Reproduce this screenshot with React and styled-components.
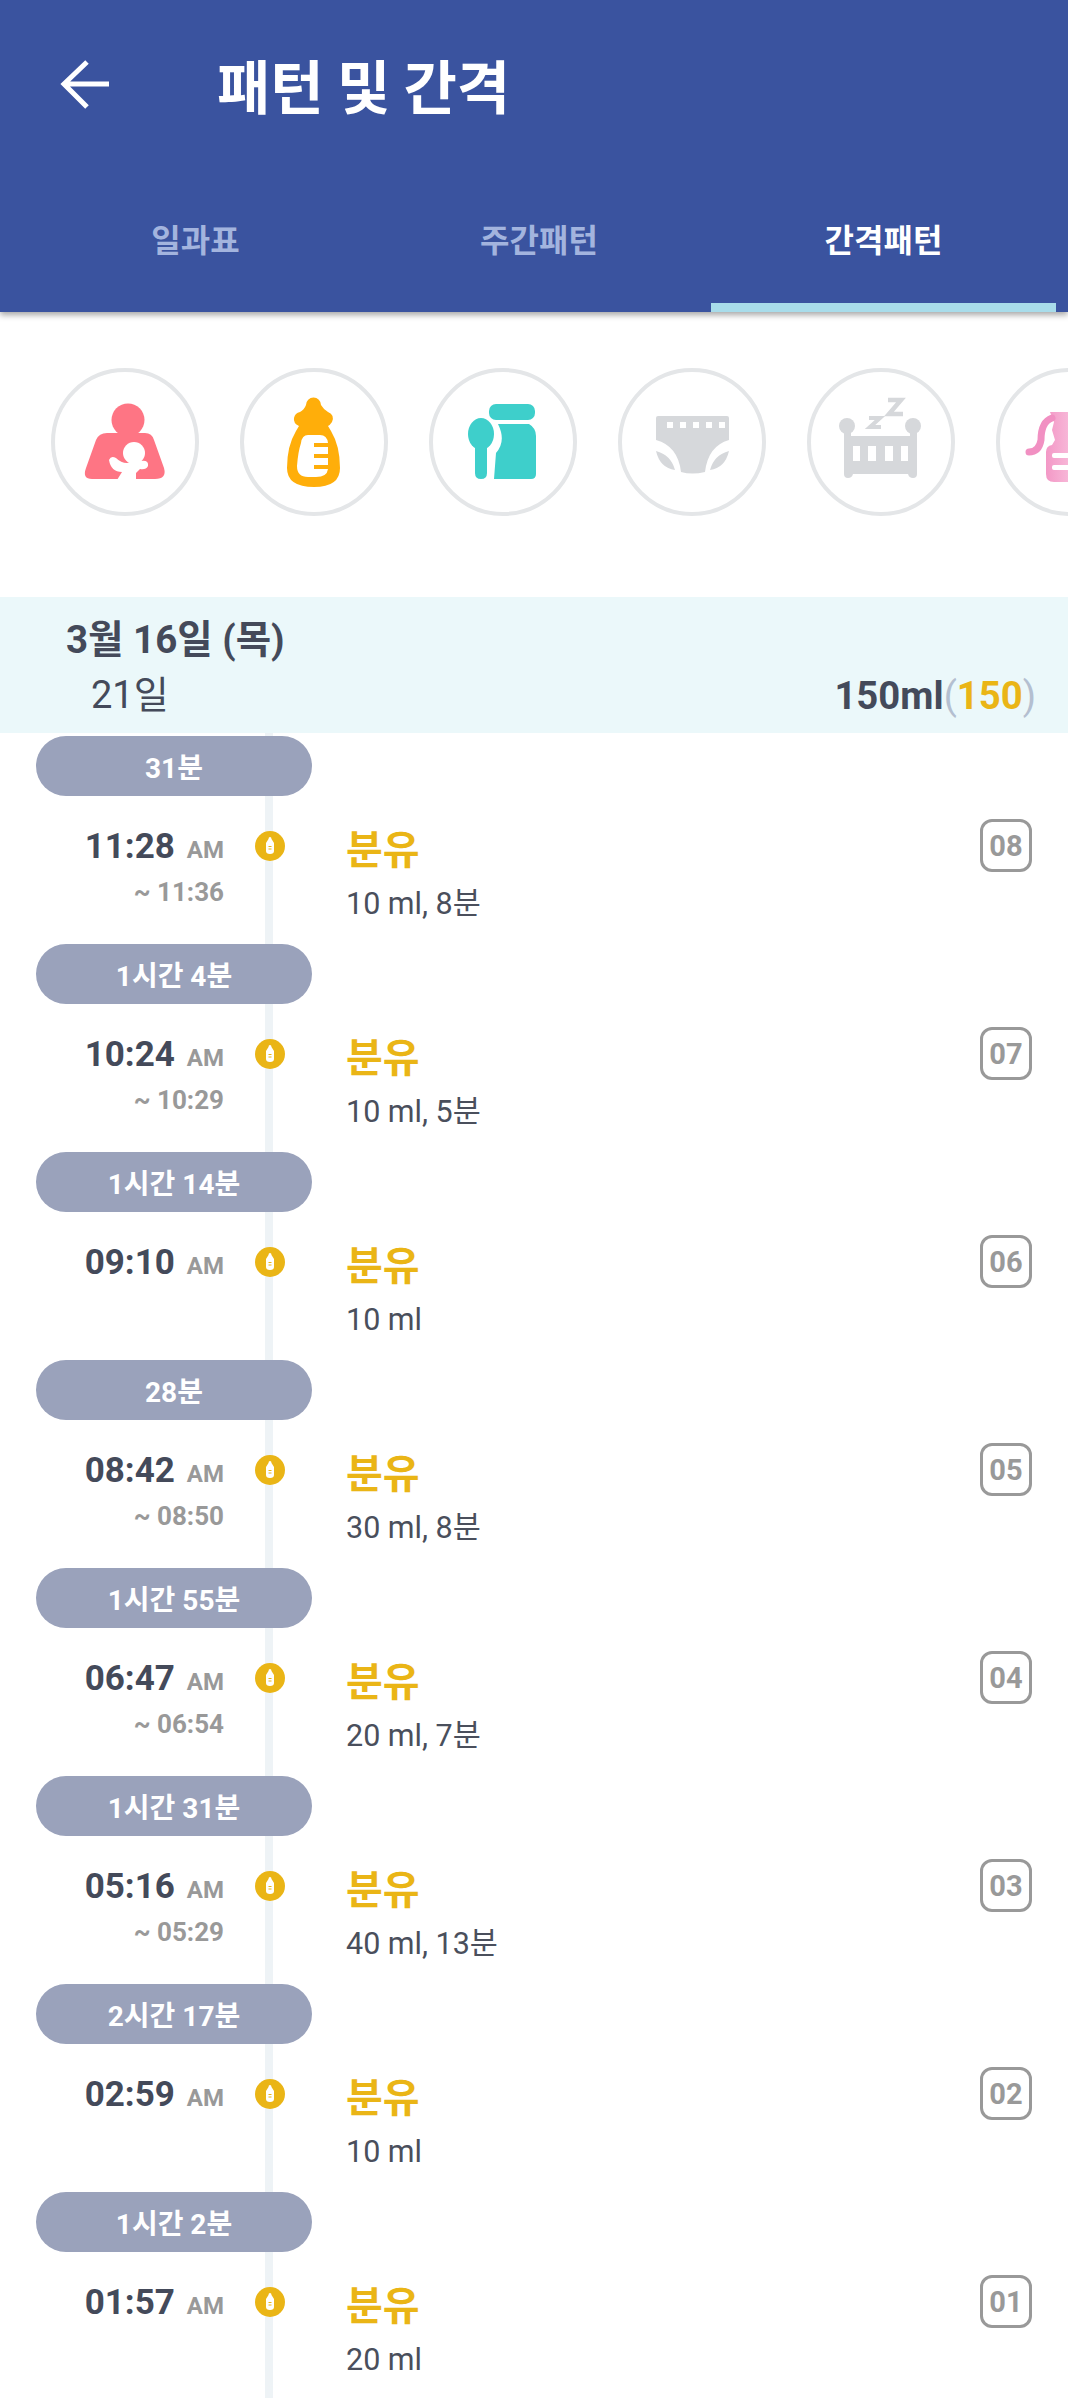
import React from 'react';
import styled, { createGlobalStyle } from 'styled-components';

const Global = createGlobalStyle`
  html, body { margin: 0; padding: 0; background: #fff; }
  body { width: 1068px; height: 2398px; overflow: hidden; font-family: Roboto, "Noto Sans CJK KR", sans-serif; }
`;

const Page = styled.div`
  width: 1068px;
  height: 2398px;
  overflow: hidden;
  background: #fff;
  color: #444a5a;
`;
const Header = styled.header`
  height: 312px;
  background: #3a539f;
  box-shadow: 0 3px 6px rgba(0, 0, 0, 0.35);
  display: flex;
  flex-direction: column;
  position: relative;
`;
const TitleBar = styled.div`
  height: 172px;
  display: flex;
  align-items: flex-start;
  padding: 47px 0 0 56px;
  box-sizing: border-box;
  flex: none;
`;
const BackIcon = styled.svg`
  width: 56px;
  height: 56px;
  flex: none;
  margin-top: 9px;
`;
const Title = styled.h1`
  margin: 0 0 0 105px;
  font-size: 58px;
  line-height: 74px;
  font-weight: 700;
  color: #fff;
  font-family: "Noto Sans CJK KR", sans-serif;
`;
const Tabs = styled.nav`
  flex: 1;
  display: grid;
  grid-template-columns: 343px 344px 345px;
  padding-left: 24px;
`;
const Tab = styled.div`
  display: flex;
  align-items: center;
  justify-content: center;
  box-sizing: border-box;
  font-size: 32px;
  font-weight: 700;
  font-family: "Noto Sans CJK KR", sans-serif;
  color: ${p => (p.$active ? '#fff' : '#a3b4de')};
  border-bottom: 9px solid ${p => (p.$active ? '#a8dcea' : 'transparent')};
`;
const Strip = styled.div`
  display: flex;
  gap: 41px;
  padding: 56px 0 0 51px;
  height: 285px;
  box-sizing: border-box;
  overflow: hidden;
`;
const Circle = styled.div`
  width: 148px;
  height: 148px;
  flex: none;
  border-radius: 50%;
  border: 4px solid #e4e6e8;
  box-sizing: border-box;
  background: #fff;
  display: flex;
  align-items: center;
  justify-content: center;
`;
const CircleArt = styled.svg`
  width: 148px;
  height: 148px;
  flex: none;
`;
const DateBand = styled.section`
  height: 136px;
  background: #ebf8fa;
  display: flex;
  justify-content: space-between;
  padding: 18px 32px 0 66px;
  box-sizing: border-box;
`;
const DateCol = styled.div`
  display: flex;
  flex-direction: column;
`;
const DateText = styled.div`
  font-size: 38.5px;
  line-height: 50px;
  font-weight: 700;
`;
const AgeText = styled.div`
  font-size: 38px;
  line-height: 50px;
  font-weight: 400;
  margin: 5px 0 0 25px;
`;
const Total = styled.div`
  align-self: flex-end;
  font-size: 38.3px;
  line-height: 50px;
  font-weight: 700;
  margin-bottom: 12px;
`;
const Paren = styled.span`
  color: #b4bfd0;
  font-weight: 400;
`;
const Amount = styled.span`
  color: #eab516;
`;
const List = styled.div`
  position: relative;
  padding-top: 3px;
  &::before {
    content: '';
    position: absolute;
    left: 265px;
    top: 0;
    width: 8px;
    height: 2000px;
    background: #eef3f6;
  }
`;
const Entry = styled.article`
  position: relative;
  height: 208px;
`;
const Pill = styled.div`
  width: 276px;
  height: 60px;
  margin-left: 36px;
  border-radius: 30px;
  background: #9aa2bb;
  color: #fff;
  font-size: 28px;
  font-weight: 700;
  display: flex;
  align-items: center;
  justify-content: center;
`;
const Row = styled.div`
  display: flex;
  align-items: flex-start;
`;
const TimeCol = styled.div`
  width: 224px;
  flex: none;
  padding-top: 31px;
  text-align: right;
`;
const Time = styled.div`
  font-size: 35px;
  line-height: 40px;
  font-weight: 700;
  color: #444a5a;
`;
const Meridiem = styled.span`
  font-size: 24px;
  font-weight: 700;
  color: #999;
  margin-left: 12px;
`;
const EndTime = styled.div`
  font-size: 26px;
  line-height: 32px;
  font-weight: 700;
  color: #999;
  margin-top: 6px;
`;
const Dot = styled.svg`
  width: 30px;
  height: 30px;
  flex: none;
  margin: 35px 0 0 31px;
`;
const Info = styled.div`
  margin: 24px 0 0 61px;
  flex: 1;
`;
const Kind = styled.div`
  font-size: 40px;
  line-height: 54px;
  font-weight: 700;
  color: #eab516;
  font-family: "Noto Sans CJK KR", sans-serif;
`;
const Detail = styled.div`
  font-size: 30.5px;
  line-height: 38px;
  color: #4a4f5c;
  margin-top: 11px;
`;
const Seq = styled.div`
  width: 52px;
  height: 53px;
  box-sizing: border-box;
  margin: 23px 36px 0 0;
  border: 3px solid #999;
  border-radius: 12px;
  color: #999;
  font-size: 29px;
  font-weight: 700;
  display: flex;
  align-items: center;
  justify-content: center;
  flex: none;
`;

const Mother = () => (
  <CircleArt viewBox="0 0 148 148">
    <circle cx="77" cy="52" r="16.5" fill="#fe7584" />
    <path d="M56 65H94Q101 65 103 72L113 100Q116 111 104 111H41Q31 111 35 100L45 72Q48 65 56 65Z" fill="#fe7584" />
    <circle cx="83" cy="85" r="11" fill="#fff" />
    <path d="M58 92Q60 87 65 90Q70 95 76 95L90 93Q98 92 97 98Q95 102 89 101L85 105V112H66L71 104Q60 104 58 92Z" fill="#fff" />
  </CircleArt>
);
const Bottle = () => (
  <CircleArt viewBox="0 0 148 148">
    <path d="M66 37A7.5 7.5 0 1 1 81 37Q84 42 88 44Q95 47 92 54Q90 57 88 58L91 63Q100 78 100 100Q100 119 74 119Q47 119 47 100Q47 78 56 63L59 58Q53 55 54 50Q55 45 60 44Q64 42 66 37Z" fill="#ffae0a" />
    <path d="M68 67H80Q87 67 88 75H74V79H88V86H74V90H88V97H74V101H88Q87 109 76 109H68Q57 109 57 98Q58 84 61 75Q62 67 68 67Z" fill="#fff" />
  </CircleArt>
);
const Jar = () => (
  <CircleArt viewBox="0 0 148 148">
    <ellipse cx="52" cy="66" rx="13" ry="16" fill="#3ecfcb" />
    <path d="M46 76H58V105Q58 111 52 111Q46 111 46 105Z" fill="#3ecfcb" />
    <rect x="60" y="36" width="46" height="16" rx="7" fill="#3ecfcb" />
    <path d="M69 56H100Q107 60 107 68V106Q107 111 102 111H65L67 85Q75 76 72 64Q71 60 69 56Z" fill="#3ecfcb" />
  </CircleArt>
);
const Diaper = () => (
  <CircleArt viewBox="0 0 148 148">
    <path d="M38 50Q38 48 40 48H109Q111 48 111 50V72Q90 78 87 104Q74 107 63 104Q60 78 38 72Z" fill="#d6d8db" />
    <g fill="#fff">
      <rect x="49" y="54" width="6" height="6" />
      <rect x="62" y="54" width="6" height="6" />
      <rect x="75" y="54" width="6" height="6" />
      <rect x="88" y="54" width="6" height="6" />
      <rect x="101" y="54" width="6" height="6" />
    </g>
    <path d="M38 83Q53 87 57 102Q42 100 38 83ZM111 83Q96 87 92 102Q107 100 111 83Z" fill="#d6d8db" />
  </CircleArt>
);
const Crib = () => (
  <CircleArt viewBox="0 0 148 148">
    <circle cx="40" cy="58" r="8" fill="#d6d8db" />
    <circle cx="106" cy="58" r="8" fill="#d6d8db" />
    <path d="M37 60H44V68H103V60H110V106Q110 110 106 110Q102 110 101 106H46Q45 110 41 110Q37 110 37 106Z" fill="#d6d8db" />
    <g fill="#fff">
      <rect x="46" y="78" width="7" height="15" />
      <rect x="61" y="78" width="8" height="15" />
      <rect x="78" y="78" width="8" height="15" />
      <rect x="94" y="78" width="7" height="15" />
    </g>
    <path d="M81 32H94L82 46H96" fill="none" stroke="#d6d8db" strokeWidth="4.5" />
    <path d="M62 50H73L63 59H74" fill="none" stroke="#d6d8db" strokeWidth="4" />
  </CircleArt>
);
const Pump = () => (
  <CircleArt viewBox="0 0 148 148">
    <defs>
      <linearGradient id="pumpFill" x1="0" x2="1" y1="0" y2="0">
        <stop offset="0" stopColor="#f398c6" />
        <stop offset="1" stopColor="#fcdcec" />
      </linearGradient>
    </defs>
    <path d="M54 44H100V114H58Q50 114 50 106V84Q50 78 56 77L59 72L56 62L58 54Z" fill="url(#pumpFill)" />
    <path d="M33 84Q43 84 45 72Q45 54 56 50" fill="none" stroke="#f190c2" strokeWidth="7" strokeLinecap="round" />
    <g fill="#fff">
      <rect x="56" y="85" width="44" height="5" rx="2" />
      <rect x="56" y="97" width="44" height="5" rx="2" />
    </g>
  </CircleArt>
);

const DotIcon = () => (
  <Dot viewBox="0 0 30 30">
    <circle cx="15" cy="15" r="15" fill="#eab516" />
    <path d="M15 6Q16.5 6 16.5 8L19 12V20Q19 23 15 23Q11 23 11 20V12L13.5 8Q13.5 6 15 6Z" fill="#fff" />
    <path d="M13.5 15.5H16.5M13.5 18H16.5" stroke="#eab516" strokeWidth="1.2" />
  </Dot>
);

const ICONS = [Mother, Bottle, Jar, Diaper, Crib, Pump];
const ENTRIES = [
  { gap: '31분', time: '11:28', end: '11:36', detail: '10 ml, 8분', seq: '08' },
  { gap: '1시간 4분', time: '10:24', end: '10:29', detail: '10 ml, 5분', seq: '07' },
  { gap: '1시간 14분', time: '09:10', detail: '10 ml', seq: '06' },
  { gap: '28분', time: '08:42', end: '08:50', detail: '30 ml, 8분', seq: '05' },
  { gap: '1시간 55분', time: '06:47', end: '06:54', detail: '20 ml, 7분', seq: '04' },
  { gap: '1시간 31분', time: '05:16', end: '05:29', detail: '40 ml, 13분', seq: '03' },
  { gap: '2시간 17분', time: '02:59', detail: '10 ml', seq: '02' },
  { gap: '1시간 2분', time: '01:57', detail: '20 ml', seq: '01' },
];

export default function App() {
  return (
    <Page>
      <Global />
      <Header>
        <TitleBar>
          <BackIcon viewBox="0 0 56 56">
            <path d="M53 28H9M31 6L8 28L31 51" fill="none" stroke="#fff" strokeWidth="5" />
          </BackIcon>
          <Title>패턴 및 간격</Title>
        </TitleBar>
        <Tabs>
          <Tab>일과표</Tab>
          <Tab>주간패턴</Tab>
          <Tab $active>간격패턴</Tab>
        </Tabs>
      </Header>
      <Strip>
        {ICONS.map((Icon, i) => (
          <Circle key={i}><Icon /></Circle>
        ))}
      </Strip>
      <DateBand>
        <DateCol>
          <DateText>3월 16일 (목)</DateText>
          <AgeText>21일</AgeText>
        </DateCol>
        <Total>150ml<Paren>(</Paren><Amount>150</Amount><Paren>)</Paren></Total>
      </DateBand>
      <List>
        {ENTRIES.map(e => (
          <Entry key={e.seq}>
            <Pill>{e.gap}</Pill>
            <Row>
              <TimeCol>
                <Time>{e.time}<Meridiem>AM</Meridiem></Time>
                {e.end && <EndTime>~ {e.end}</EndTime>}
              </TimeCol>
              <DotIcon />
              <Info>
                <Kind>분유</Kind>
                <Detail>{e.detail}</Detail>
              </Info>
              <Seq>{e.seq}</Seq>
            </Row>
          </Entry>
        ))}
      </List>
    </Page>
  );
}
